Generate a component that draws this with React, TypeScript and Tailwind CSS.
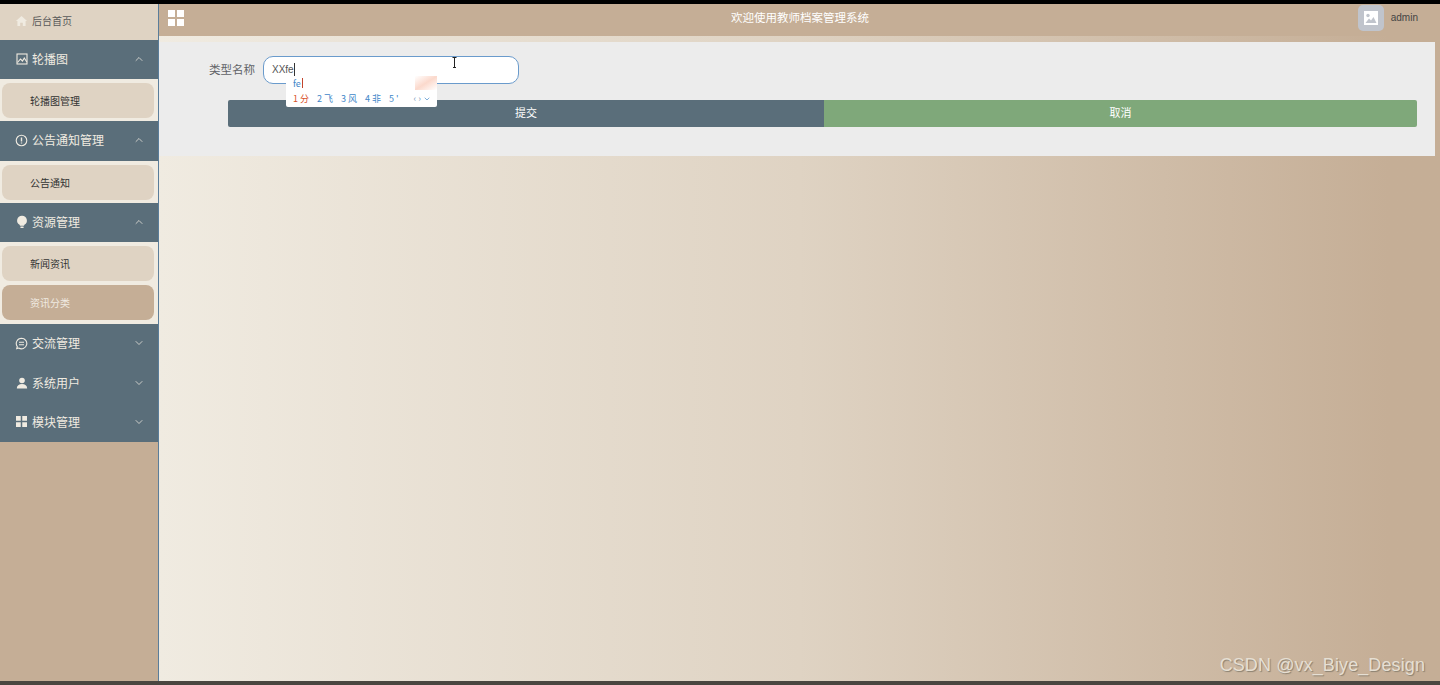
import type { ReactNode } from 'react'
import { ChevronDown, ChevronUp } from 'lucide-react'

const cjk = 'font-["Noto_Sans_CJK_SC","Liberation_Sans",sans-serif]'

function HomeIcon() {
  return (
    <svg width="14" height="14" viewBox="0 0 14 14" fill="#f0ebe1">
      <path d="M7 1.500 1 7h1.600v5.500h3V9h2.800v3.500h3V7H13z" />
    </svg>
  )
}

function PictureIcon() {
  return (
    <svg width="12" height="12" viewBox="0 0 12 12" fill="none" stroke="#f0ebe1" strokeWidth="1.100">
      <rect x="1" y="1" width="10" height="10" />
      <path d="M1.500 9.500 4.500 6l2 2 1.800-3 2.500 4" />
    </svg>
  )
}

function InfoIcon() {
  return (
    <svg width="13" height="13" viewBox="0 0 13 13" fill="none" stroke="#f0ebe1" strokeWidth="1.100">
      <circle cx="6.500" cy="6.500" r="5.300" />
      <path d="M6.500 3.500v4M6.500 8.600v1" strokeWidth="1.400" />
    </svg>
  )
}

function BulbIcon() {
  return (
    <svg width="12" height="14" viewBox="0 0 12 14" fill="#f0ebe1">
      <path d="M6 .8a4.800 4.800 0 0 0-2.400 9l.4 1h4l.4-1A4.800 4.800 0 0 0 6 .8z" />
      <rect x="4.300" y="11.500" width="3.400" height="1.400" rx=".6" />
    </svg>
  )
}

function ChatIcon() {
  return (
    <svg width="13" height="13" viewBox="0 0 13 13" fill="none" stroke="#f0ebe1" strokeWidth="1.100">
      <path d="M6.500 1.200a5.300 5.300 0 1 1-2.800 9.800l-2 .6.600-2A5.300 5.300 0 0 1 6.500 1.200z" />
      <path d="M4 5.300h5M4 7.700h5" />
    </svg>
  )
}

function UserIcon() {
  return (
    <svg width="12" height="12" viewBox="0 0 12 12" fill="#f0ebe1">
      <circle cx="6" cy="3.500" r="2.800" />
      <path d="M.8 11.500c0-3 2.200-4.500 5.200-4.500s5.200 1.500 5.200 4.500z" />
    </svg>
  )
}

function GridIcon({ size, gap, fill }: { size: number; gap: number; fill: string }) {
  const cell = (size - gap) / 2
  return (
    <svg width={size} height={size} viewBox={`0 0 ${size} ${size}`} fill={fill}>
      <rect width={cell} height={cell} />
      <rect x={cell + gap} width={cell} height={cell} />
      <rect y={cell + gap} width={cell} height={cell} />
      <rect x={cell + gap} y={cell + gap} width={cell} height={cell} />
    </svg>
  )
}

function MenuHeader({ icon, label, open, h }: { icon: ReactNode; label: string; open?: boolean; h: string }) {
  return (
    <div className={`flex items-center bg-[#5a6e7a] pb-[2px] pl-[15px] pr-[13px] text-[#f0ebe1] ${h}`}>
      <span className="flex w-[13px] justify-center">{icon}</span>
      <span className="ml-[4px] text-[12px]">{label}</span>
      <span className="ml-auto">
        {open ? <ChevronUp size={12} strokeWidth={1.500} /> : <ChevronDown size={12} strokeWidth={1.500} />}
      </span>
    </div>
  )
}

function SubItem({ label, active }: { label: string; active?: boolean }) {
  return (
    <div
      className={`ml-[2px] flex h-[35px] w-[152px] items-center rounded-lg pl-[28px] text-[10px] ${
        active ? 'bg-[#c5ae96] text-[#f0ebe1]' : 'bg-[#dfd3c3] text-[#333333]'
      }`}
    >
      {label}
    </div>
  )
}

export default function App() {
  return (
    <div className={`flex h-[685px] w-[1440px] flex-col overflow-hidden bg-[#c5ae96] ${cjk}`}>
      <div className="h-[4px] shrink-0 bg-black" />

      <div className="flex min-h-0 flex-1">
        {/* 侧边栏 */}
        <aside className="w-[159px] shrink-0 border-r border-[#5a7d9a] bg-[#c5ae96]">
          <div className="flex h-[36px] items-center bg-[#dfd3c3] pb-[3px] pl-[15px] text-[10px] text-[#5a5a5a]">
            <span className="flex w-[13px] justify-center">
              <HomeIcon />
            </span>
            <span className="ml-[4px]">后台首页</span>
          </div>

          <MenuHeader icon={<PictureIcon />} label="轮播图" open h="h-[39px]" />
          <div className="flex h-[42px] items-center bg-[#f0ebe1]">
            <SubItem label="轮播图管理" />
          </div>

          <MenuHeader icon={<InfoIcon />} label="公告通知管理" open h="h-[40px]" />
          <div className="flex h-[42px] items-center bg-[#f0ebe1]">
            <SubItem label="公告通知" />
          </div>

          <MenuHeader icon={<BulbIcon />} label="资源管理" open h="h-[39px]" />
          <div className="flex h-[82px] flex-col justify-center gap-[4px] bg-[#f0ebe1]">
            <SubItem label="新闻资讯" />
            <SubItem label="资讯分类" active />
          </div>

          <MenuHeader icon={<ChatIcon />} label="交流管理" h="h-[40px]" />
          <MenuHeader icon={<UserIcon />} label="系统用户" h="h-[39px]" />
          <MenuHeader icon={<GridIcon size={11} gap={1.500} fill="#f0ebe1" />} label="模块管理" h="h-[39px]" />
        </aside>

        {/* 主区域 */}
        <main className="flex min-w-0 flex-1 flex-col bg-gradient-to-r from-[#f0ebe1] via-[#dfd3c3] via-[50%] to-[#c5ae96] to-[96%]">
          <header className="flex h-[32px] shrink-0 items-center bg-[#c5ae96] pb-[5px] pl-[9px] pr-[22px]">
            <GridIcon size={16} gap={2} fill="#ffffff" />
            <h1 className="ml-[547px] text-[11.500px] font-normal text-white">欢迎使用教师档案管理系统</h1>
            <div className="ml-auto flex items-center gap-[7px]">
              <div className="flex h-[26px] w-[26px] items-center justify-center rounded-[5px] bg-[#c0c4cc]">
                <svg width="14" height="14" viewBox="0 0 14 14">
                  <rect width="14" height="14" fill="#ffffff" />
                  <circle cx="4" cy="4.500" r="1.700" fill="#c0c4cc" />
                  <path d="M1.500 12 5 7.500l2 2 2.500-3.500 3 6z" fill="#c0c4cc" />
                </svg>
              </div>
              <span className="font-['Liberation_Sans',sans-serif] text-[10px] text-[#444444]">admin</span>
            </div>
          </header>

          <div className="h-[6px] shrink-0" />

          <section className="mr-[5px] h-[114px] shrink-0 bg-[#ececec] pl-[50px] pt-[14px]">
            <div className="flex h-[28px] items-center">
              <label className="w-[46px] whitespace-nowrap pb-px text-[11.500px] text-[#606266]">类型名称</label>
              <div className="relative ml-[8px] flex h-[28px] w-[256px] items-center rounded-[10px] border border-[#6a9bcc] bg-white pb-px pl-[8px] font-['Liberation_Sans',sans-serif] text-[10px] text-[#555555]">
                XXfe
                <span className="h-[13px] w-px bg-[#333333]" />

                {/* 鼠标光标 */}
                <svg className="absolute left-[187px] top-0" width="7" height="11" viewBox="0 0 7 11" fill="none" stroke="#222222">
                  <path d="M1.500.5h4M3.500.5v10M2 10.500h3" />
                </svg>

                {/* 输入法候选框 */}
                <div className={`absolute left-[22px] top-[19px] z-10 h-[31px] w-[151px] rounded-b-[2px] bg-white ${cjk}`}>
                  <div className="absolute right-0 top-0 h-[14px] w-[22px] bg-gradient-to-br from-[#ffffff] via-[#fbd9cc] to-[#ffffff]" />
                  <div className="flex h-[14px] items-center pl-[7px] text-[9px] leading-none text-[#3f87c9]">
                    fe<span className="ml-px h-[10px] w-px bg-[#c2452d]" />
                  </div>
                  <div className="flex h-[17px] items-center pl-[7px] text-[9px] leading-none text-[#3f87c9]">
                    <span className="text-[#d9512c]">1 分</span>
                    <span className="ml-[8px]">2 飞</span>
                    <span className="ml-[8px]">3 风</span>
                    <span className="ml-[8px]">4 非</span>
                    <span className="ml-[8px]">5 '</span>
                    <span className="ml-[15px] text-[#7f9fc0]">‹ ›</span>
                    <ChevronDown size={8} className="ml-[2px]" />
                  </div>
                </div>
              </div>
            </div>

            <div className="ml-[19px] mt-[16px] flex h-[27px] w-[1189px] text-[11px] text-white">
              <button className="w-[596px] rounded-l-[2px] bg-[#5a6e7a] pb-[2px]">提交</button>
              <button className="flex-1 rounded-r-[2px] bg-[#7fa87a] pb-[2px]">取消</button>
            </div>
          </section>

          <div className="flex flex-1 items-end justify-end pb-[3px] pr-[15px]">
            <span className="font-['Liberation_Sans',sans-serif] text-[18px] leading-[26px] tracking-[0.1px] text-[#e6dfd3] [text-shadow:1px_1px_1px_#8a8070]">
              CSDN @vx_Biye_Design
            </span>
          </div>
        </main>
      </div>

      <div className="h-[4px] shrink-0 bg-[#4a4640]" />
    </div>
  )
}
